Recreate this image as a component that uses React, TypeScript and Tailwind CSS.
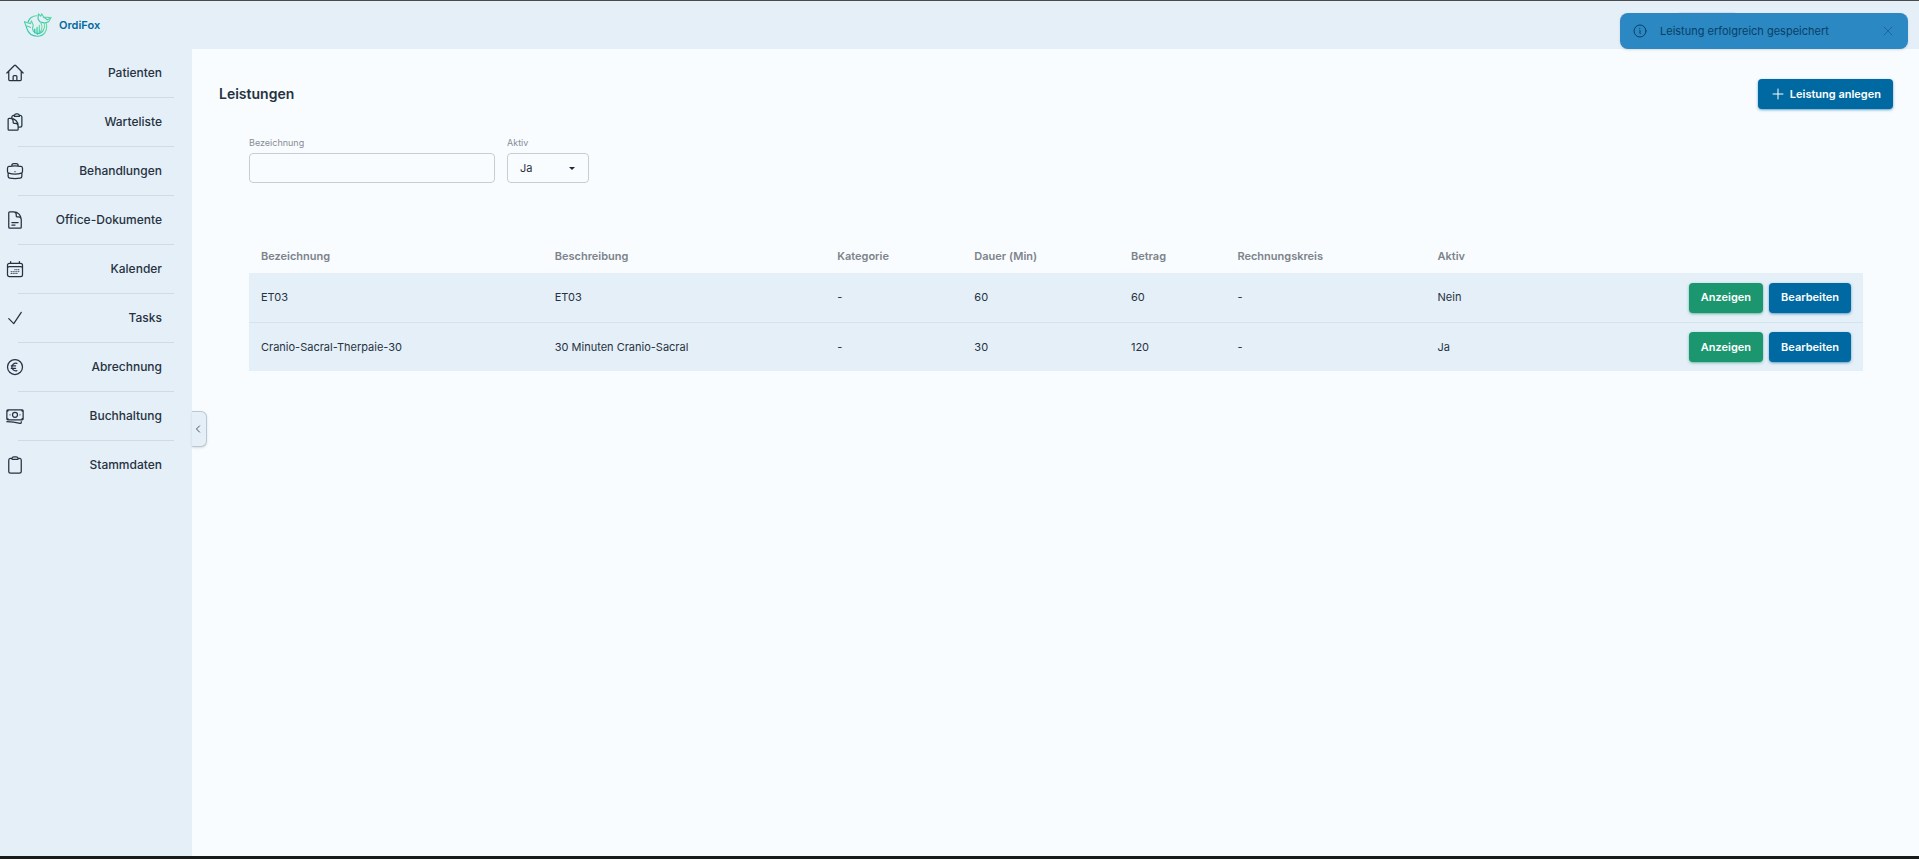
import React, { useState } from 'react';
import {
  HiOutlineHome,
  HiOutlineClipboardDocument,
  HiOutlineBriefcase,
  HiOutlineDocumentText,
  HiOutlineCalendarDays,
  HiOutlineCheck,
  HiOutlineCurrencyEuro,
  HiOutlineBanknotes,
  HiOutlineClipboard,
  HiOutlineInformationCircle,
  HiOutlineXMark,
  HiOutlinePlus,
  HiOutlineChevronLeft,
} from 'react-icons/hi2';

const navItems = [
  { label: 'Patienten', icon: HiOutlineHome },
  { label: 'Warteliste', icon: HiOutlineClipboardDocument },
  { label: 'Behandlungen', icon: HiOutlineBriefcase },
  { label: 'Office-Dokumente', icon: HiOutlineDocumentText },
  { label: 'Kalender', icon: HiOutlineCalendarDays },
  { label: 'Tasks', icon: HiOutlineCheck },
  { label: 'Abrechnung', icon: HiOutlineCurrencyEuro },
  { label: 'Buchhaltung', icon: HiOutlineBanknotes },
  { label: 'Stammdaten', icon: HiOutlineClipboard },
];

const columns = [
  { title: 'Bezeichnung', width: 'w-[18.2%]' },
  { title: 'Beschreibung', width: 'w-[17.5%]' },
  { title: 'Kategorie', width: 'w-[8.5%]' },
  { title: 'Dauer (Min)', width: 'w-[9.7%]' },
  { title: 'Betrag', width: 'w-[6.6%]' },
  { title: 'Rechnungskreis', width: 'w-[12.4%]' },
  { title: 'Aktiv', width: 'w-[8%]' },
];

const services = [
  ['ET03', 'ET03', '-', '60', '60', '-', 'Nein'],
  ['Cranio-Sacral-Therpaie-30', '30 Minuten Cranio-Sacral', '-', '30', '120', '-', 'Ja'],
];

const FoxLogo: React.FC = () => (
  <svg viewBox="0 0 60 50" className="h-6 w-7" fill="none" stroke="url(#fox)" strokeWidth="2.4" strokeLinecap="round" strokeLinejoin="round">
    <defs>
      <linearGradient id="fox" x1="0" y1="1" x2="1" y2="0">
        <stop offset="0" stopColor="#2bbfb3" />
        <stop offset="1" stopColor="#6fe39a" />
      </linearGradient>
    </defs>
    <path d="M30 12 L31 1 L36 6 L38 1 L42 8 L58 9 L53 18 L44 21 L34 18 Z" />
    <path d="M42 8 L50 14 L58 9" />
    <path d="M28 5 C18 6 11 11 9 18" />
    <path d="M1 18 L14 22 L16 16 L20 26 C16 34 20 42 29 44" />
    <path d="M1 18 L6 32 C9 43 18 49 29 49 C42 49 51 39 48 22" />
    <path d="M6 27 L14 30" />
    <path d="M44 21 C46 33 40 43 29 44" />
    <path d="M36 20 C41 29 38 38 32 43" />
    <path d="M23 34 V41 M28 30 V43 M33 26 V42" strokeWidth="3" />
  </svg>
);

const App: React.FC = () => {
  const [name, setName] = useState('');
  const [active, setActive] = useState('Ja');
  const [toastOpen, setToastOpen] = useState(true);

  return (
    <div className="flex h-screen flex-col border-t border-b-3 border-t-[#4a4a4d] border-b-[#171c1b] bg-[#f8fcff] font-[Inter,sans-serif] text-[11px] text-[#263241]">
      {/* Header */}
      <header className="flex h-12 shrink-0 items-center justify-between bg-[#e5eff8] pr-[180px] pl-6">
        <a href="#" className="flex items-center gap-[7px] font-semibold text-[#0069a1]">
          <FoxLogo />
          OrdiFox
        </a>
        <button type="button" aria-label="Benutzermenü" className="h-[26px] w-16 rounded-md bg-[#d3dfe9]" />
      </header>

      <div className="flex min-h-0 flex-1">
        {/* Sidebar */}
        <aside className="relative w-48 shrink-0 bg-[#e5eff8]">
          <nav>
            <ul>
              {navItems.map(({ label, icon: Icon }, i) => (
                <li key={label}>
                  <a href="#" className="flex h-12 items-center justify-between pr-[30px] pl-[5px] text-xs font-medium">
                    <Icon className="size-5" />
                    {label}
                  </a>
                  <div className={i < navItems.length - 1 ? 'mx-[18px] h-px bg-[#cfdbe5]' : 'hidden'} />
                </li>
              ))}
            </ul>
          </nav>
          <button
            type="button"
            aria-label="Menü einklappen"
            className="absolute top-[362px] left-full flex h-9 w-[15px] items-center justify-center rounded-r-md border border-l-0 border-[#b8c8d4] bg-[#e5eff8] pr-0.5 shadow-sm"
          >
            <HiOutlineChevronLeft className="size-2.5" strokeWidth={2} />
          </button>
        </aside>

        {/* Content */}
        <main className="min-w-0 flex-1 pt-[30px] pr-[26px] pl-[27px]">
          <div className="flex items-center justify-between">
            <h1 className="text-sm font-semibold">Leistungen</h1>
            <button
              type="button"
              className="flex h-[30px] items-center gap-1 rounded bg-[#0069a1] px-3 font-semibold text-white shadow-sm shadow-[#0069a1]/50"
            >
              <HiOutlinePlus className="size-4" />
              Leistung anlegen
            </button>
          </div>

          <div className="px-[30px] pt-7">
            {/* Filter */}
            <div className="flex gap-3">
              <div className="flex w-[246px] flex-col gap-1">
                <label htmlFor="name" className="text-[9px] leading-3 text-[#868c94]">
                  Bezeichnung
                </label>
                <input
                  id="name"
                  value={name}
                  onChange={(e) => setName(e.target.value)}
                  className="h-[30px] rounded border border-[#c8cdd1] px-3 outline-none"
                />
              </div>
              <div className="flex w-[82px] flex-col gap-1">
                <label htmlFor="active" className="text-[9px] leading-3 text-[#868c94]">
                  Aktiv
                </label>
                <div className="relative">
                  <select
                    id="active"
                    value={active}
                    onChange={(e) => setActive(e.target.value)}
                    className="h-[30px] w-full appearance-none rounded border border-[#c8cdd1] px-3 outline-none"
                  >
                    <option>Ja</option>
                    <option>Nein</option>
                  </select>
                  <svg viewBox="0 0 6 3" className="pointer-events-none absolute top-3.5 right-3.5 h-[3px] w-1.5" fill="#1f2937">
                    <path d="M0 0h6L3 3z" />
                  </svg>
                </div>
              </div>
            </div>

            {/* Table */}
            <table className="mt-14 w-full table-fixed border-separate border-spacing-0 text-left">
              <thead>
                <tr className="h-[34px] text-[#7d838a]">
                  {columns.map((col) => (
                    <th key={col.title} className={`px-3 font-semibold ${col.width}`}>
                      {col.title}
                    </th>
                  ))}
                  <th />
                </tr>
              </thead>
              <tbody className="[&>tr+tr>td]:border-t [&>tr+tr>td]:border-[#d7e3ec]">
                {services.map((row) => (
                  <tr key={row[0]} className="h-[49px] bg-[#e5eff8]">
                    {row.map((cell, i) => (
                      <td key={i} className="px-3">
                        {cell}
                      </td>
                    ))}
                    <td className="px-3">
                      <div className="flex justify-end gap-1.5 font-semibold text-white">
                        <button type="button" className="h-[30px] rounded bg-[#1b966f] px-3 shadow-sm shadow-[#1b966f]/50">
                          Anzeigen
                        </button>
                        <button type="button" className="h-[30px] rounded bg-[#0069a1] px-3 shadow-sm shadow-[#0069a1]/50">
                          Bearbeiten
                        </button>
                      </div>
                    </td>
                  </tr>
                ))}
              </tbody>
            </table>
          </div>
        </main>
      </div>

      {/* Toast */}
      {toastOpen && (
        <div role="status" className="absolute top-[13px] right-[11px] flex h-9 w-72 items-center rounded-lg bg-[#2b88c2] px-3 text-[#083f68] shadow-sm">
          <HiOutlineInformationCircle className="size-4" />
          <span className="ml-3 flex-1">Leistung erfolgreich gespeichert</span>
          <button type="button" aria-label="Schließen" onClick={() => setToastOpen(false)} className="text-[#1d6594]">
            <HiOutlineXMark className="size-4" />
          </button>
        </div>
      )}
    </div>
  );
};

export default App;
